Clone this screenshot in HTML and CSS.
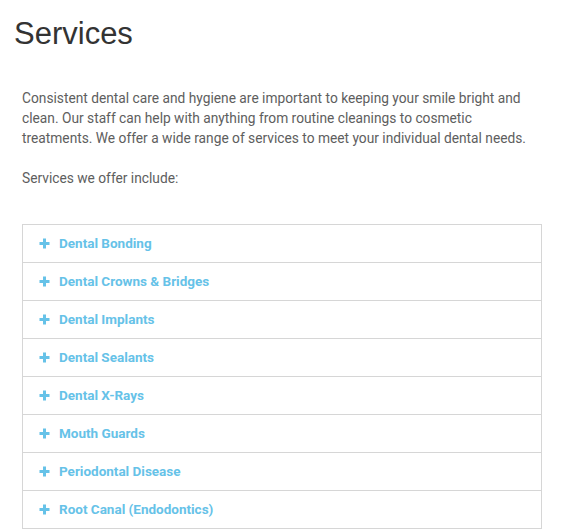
FILE: index.html
```html
<!DOCTYPE html>
<html>
<head>
<meta charset="utf-8">
<link rel="stylesheet" href="styles.css">
</head>
<body>
<div class="page">
  <h1 class="title">Services</h1>
  <div class="content">
    <p>Consistent dental care and hygiene are important to keeping your smile bright and clean. Our staff can help with anything from routine cleanings to cosmetic treatments. We offer a wide range of services to meet your individual dental needs.</p>
    <p>Services we offer include:</p>
    <ul class="accordion">
      <li class="item"><svg class="plus" viewBox="0 0 11 11"><path d="M5.5 0.5v10M0.5 5.5h10"/></svg><span>Dental Bonding</span></li>
      <li class="item"><svg class="plus" viewBox="0 0 11 11"><path d="M5.5 0.5v10M0.5 5.5h10"/></svg><span>Dental Crowns &amp; Bridges</span></li>
      <li class="item"><svg class="plus" viewBox="0 0 11 11"><path d="M5.5 0.5v10M0.5 5.5h10"/></svg><span>Dental Implants</span></li>
      <li class="item"><svg class="plus" viewBox="0 0 11 11"><path d="M5.5 0.5v10M0.5 5.5h10"/></svg><span>Dental Sealants</span></li>
      <li class="item"><svg class="plus" viewBox="0 0 11 11"><path d="M5.5 0.5v10M0.5 5.5h10"/></svg><span>Dental X-Rays</span></li>
      <li class="item"><svg class="plus" viewBox="0 0 11 11"><path d="M5.5 0.5v10M0.5 5.5h10"/></svg><span>Mouth Guards</span></li>
      <li class="item"><svg class="plus" viewBox="0 0 11 11"><path d="M5.5 0.5v10M0.5 5.5h10"/></svg><span>Periodontal Disease</span></li>
      <li class="item"><svg class="plus" viewBox="0 0 11 11"><path d="M5.5 0.5v10M0.5 5.5h10"/></svg><span>Root Canal (Endodontics)</span></li>
    </ul>
  </div>
</div>
</body>
</html>
```
FILE: styles.css
```css
html, body {
  margin: 0;
  padding: 0;
  background: #fff;
}
.page {
  padding: 17px 23px 0 0;
}
.title {
  margin: 0 0 0 14px;
  font-family: "Liberation Sans", Arial, sans-serif;
  font-weight: 400;
  font-size: 31px;
  line-height: 34px;
  color: #333;
}
.content {
  padding-left: 22px;
  margin-top: 37px;
}
.content p {
  margin: 0 0 20px;
  font-family: Roboto, sans-serif;
  font-size: 13.75px;
  line-height: 20px;
  color: #5e5e5e;
}
.accordion {
  list-style: none;
  margin: 36px 0 0;
  padding: 0;
  border: 1px solid #d6d6d6;
  border-bottom: 0;
}
.item {
  display: flex;
  align-items: center;
  gap: 9px;
  height: 36px;
  padding: 0 0 1px 16px;
  border-bottom: 1px solid #d6d6d6;
  font-family: Roboto, sans-serif;
  font-weight: 700;
  font-size: 13.5px;
  color: #66c2e8;
}
.plus {
  width: 11px;
  height: 11px;
  stroke: #66c2e8;
  stroke-width: 3;
  fill: none;
}
```
